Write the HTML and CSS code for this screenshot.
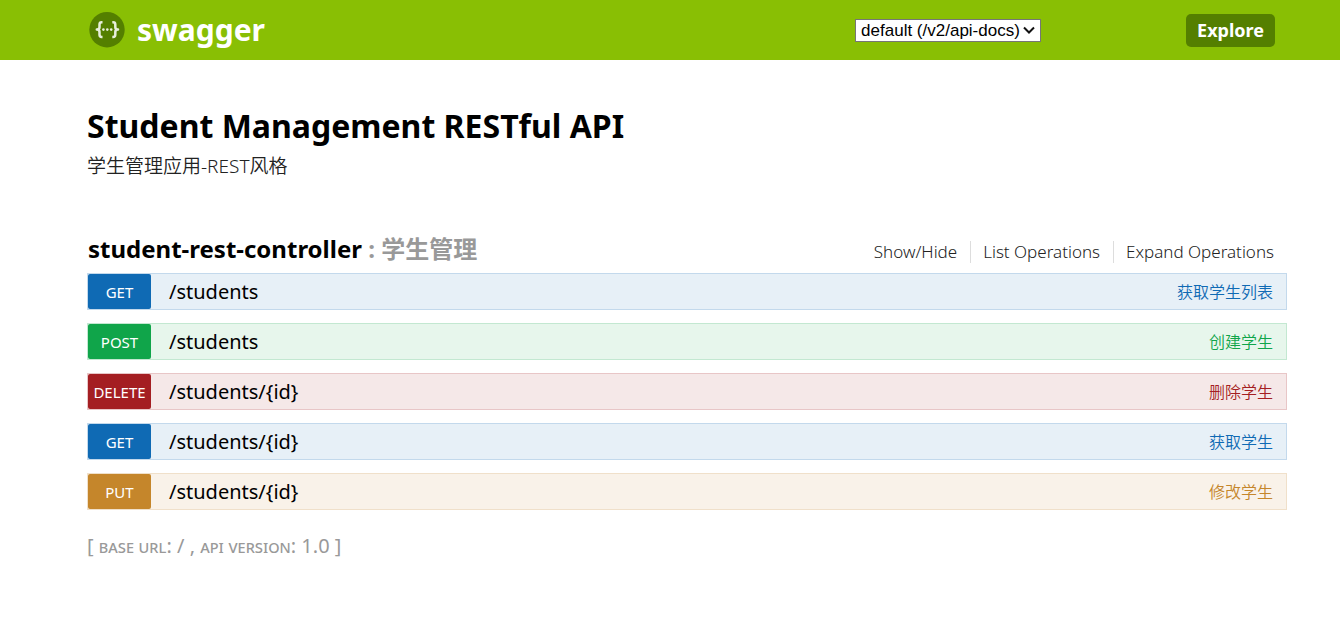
FILE: index.html
```html
<!DOCTYPE html>
<html lang="zh-CN">
<head>
<meta charset="utf-8">
<title>Swagger UI</title>
<link rel="stylesheet" href="styles.css">
</head>
<body>
<header class="header">
  <a class="logo" href="#">
    <svg class="logo-mark" viewBox="0 0 36 36" aria-hidden="true">
      <circle cx="18" cy="17.700" r="17.700" fill="#547f00"/>
      <g fill="none" stroke="#e8efdc" stroke-width="2.500" stroke-linejoin="round">
        <path d="M13.500 10.200h-.8q-2.200 0-2.200 2.200v2.800q0 2.400-2.700 2.400 2.700 0 2.700 2.400v2.800q0 2.200 2.200 2.200h.8"/>
        <path d="M23.300 10.200h.8q2.200 0 2.200 2.200v2.800q0 2.400 2.700 2.400-2.700 0-2.700 2.400v2.800q0 2.200-2.200 2.200h-.8"/>
      </g>
      <g fill="#e8efdc"><circle cx="14.400" cy="17.600" r="1.300"/><circle cx="18.300" cy="17.600" r="1.300"/><circle cx="22.200" cy="17.600" r="1.300"/></g>
    </svg>
    <span class="logo-text">swagger</span>
  </a>
  <form class="selector">
    <select class="docs-select" aria-label="API docs">
      <option>default (/v2/api-docs)</option>
    </select>
    <button class="explore" type="button">Explore</button>
  </form>
</header>
<main class="content">
  <h1 class="title">Student Management RESTful API</h1>
  <p class="description">学生管理应用-REST风格</p>
  <section class="resource">
    <div class="heading">
      <h2 class="name"><a class="name-link" href="#">student-rest-controller</a> : 学生管理</h2>
      <ul class="options">
        <li class="option"><a href="#">Show/Hide</a></li>
        <li class="option"><a href="#">List Operations</a></li>
        <li class="option"><a href="#">Expand Operations</a></li>
      </ul>
    </div>
    <ul class="operations">
      <li class="operation get"><a class="method" href="#">GET</a><a class="path" href="#">/students</a><a class="summary" href="#">获取学生列表</a></li>
      <li class="operation post"><a class="method" href="#">POST</a><a class="path" href="#">/students</a><a class="summary" href="#">创建学生</a></li>
      <li class="operation delete"><a class="method" href="#">DELETE</a><a class="path" href="#">/students/{id}</a><a class="summary" href="#">删除学生</a></li>
      <li class="operation get"><a class="method" href="#">GET</a><a class="path" href="#">/students/{id}</a><a class="summary" href="#">获取学生</a></li>
      <li class="operation put"><a class="method" href="#">PUT</a><a class="path" href="#">/students/{id}</a><a class="summary" href="#">修改学生</a></li>
    </ul>
  </section>
  <footer class="footer">[ <span class="caps">base url</span>: / , <span class="caps">api version</span>: 1.0 ]</footer>
</main>
</body>
</html>
```
FILE: styles.css
```css
* { box-sizing: border-box; }

body {
  margin: 0;
  background: #fff;
  color: #000;
  font-family: "Noto Sans", "Noto Sans CJK SC", sans-serif;
}

a { color: inherit; text-decoration: none; }
ul { list-style: none; margin: 0; padding: 0; }

.header {
  display: flex;
  align-items: center;
  justify-content: space-between;
  min-height: 60px;
  padding: 0 65px 0 89px;
  background: #89bf04;
}

.logo { display: flex; align-items: center; gap: 12px; color: #fff; }
.logo-mark { width: 36px; height: 36px; }
.logo-text { font-size: 30px; line-height: 36px; font-weight: 700; }

.selector { display: flex; align-items: center; gap: 145px; }

.docs-select {
  appearance: none;
  height: 23px;
  padding: 0 20px 0 5px;
  border: 1px solid #767676;
  border-radius: 0;
  background: #fff url("data:image/svg+xml,%3Csvg xmlns='http://www.w3.org/2000/svg' width='12' height='8' viewBox='0 0 12 8'%3E%3Cpath d='M1 1.500l5 5 5-5' fill='none' stroke='%23111' stroke-width='2'/%3E%3C/svg%3E") no-repeat right 5px center;
  color: #000;
  font: 17px "Liberation Sans", sans-serif;
}

.explore {
  height: 33px;
  padding: 0 11px;
  border: 0;
  border-radius: 5px;
  background: #547f00;
  color: #fff;
  font: 700 18px/32px "Noto Sans", sans-serif;
}

.content { padding: 45px 53px 48px 87px; }

.title { margin: 0; font-size: 32px; line-height: 42px; font-weight: 700; }

.description { margin: 5px 0 0; color: #222; font-size: 19px; line-height: 28px; font-weight: 350; }

.resource { margin-top: 51px; }

.heading {
  display: flex;
  align-items: center;
  justify-content: space-between;
  padding: 0 13px 6px 1px;
}

.name { margin: 0; color: #999; font-size: 24px; line-height: 36px; font-weight: 700; }
.name-link { color: #000; }

.options { display: flex; padding-top: 6px; color: #222; font-size: 17px; line-height: 22px; font-weight: 350; }
.option + .option { margin-left: 13px; padding-left: 12px; border-left: 1px solid #ddd; }

.operations { display: grid; gap: 13px; }

.operation {
  display: flex;
  align-items: center;
  min-height: 37px;
  padding-right: 13px;
  border: 1px solid;
}

.method {
  width: 63px;
  height: 35px;
  border-radius: 2px;
  color: #fff;
  font-size: 15px;
  line-height: 37px;
  text-align: center;
}

.path { margin-left: 18px; color: #000; font-size: 20px; line-height: 35px; }
.summary { height: 35px; margin-left: auto; font-size: 16px; line-height: 37px; font-weight: 350; }

.get { border-color: #c3d9ec; background: #e7f0f7; color: #0f6ab4; }
.get .method { background: #0f6ab4; }
.post { border-color: #c3e8d1; background: #e7f6ec; color: #10a54a; }
.post .method { background: #10a54a; }
.delete { border-color: #e8c6c7; background: #f5e8e8; color: #a41e22; }
.delete .method { background: #a41e22; }
.put { border-color: #f0e0ca; background: #f9f2e9; color: #c5862b; }
.put .method { background: #c5862b; }

.footer { margin-top: 22px; color: #999; font-size: 20px; line-height: 28px; }
.caps { font-size: 18px; font-variant: small-caps; }
```
